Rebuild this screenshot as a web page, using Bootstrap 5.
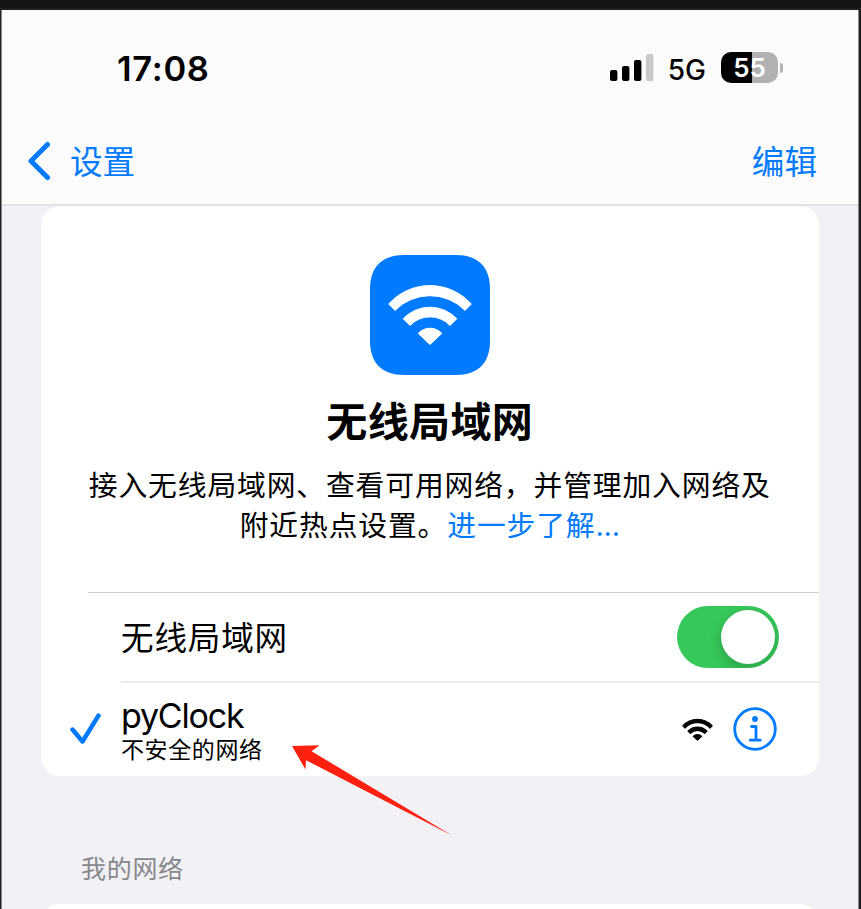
<!DOCTYPE html>
<html lang="zh-CN">
<head>
<meta charset="utf-8">
<meta name="viewport" content="width=device-width, initial-scale=1">
<title>无线局域网</title>
<link href="https://cdn.jsdelivr.net/npm/bootstrap@5.3.0/dist/css/bootstrap.min.css" rel="stylesheet">
<style>
  :root { --ios-blue: #007aff; --ios-bg: #f2f1f6; }
  body { font-family: Inter, "Noto Sans CJK SC", sans-serif; color: #000; background: #141414; }
  svg { display: block; flex: none; }
  .phone { height: 901px; margin-top: 8px; border: solid #1f1f1f; border-width: 2px 2px 0 1px; }
  .screen { background: var(--ios-bg); border: solid #8c8c8e; border-width: 0 1px 0 1px; }
  .topbar { height: 196px; background: #fbfbfc; border-bottom: 2px solid #e2e2e5; }
  .statusbar { height: 118px; padding: 0 75px 0 115px; }
  .clock { font-size: 34.5px; font-weight: 600; line-height: 1; letter-spacing: .7px; }
  .status-icons { padding-bottom: 3px; }
  .carrier { font-size: 28px; font-weight: 500; line-height: 1; margin: 5px 15px 0 14px; }
  .battery { width: 57px; height: 31px; border-radius: 10px; background: linear-gradient(90deg, #000 31.5px, #b1b1b1 31.5px); color: #fff; font-size: 26px; font-weight: 600; line-height: 1; }
  .nub { width: 3px; height: 10px; border-radius: 0 5px 5px 0; background: #b1b1b1; margin-left: 2px; }
  .topnav { height: 66px; padding: 0 41px 0 25px; font-size: 32.6px; line-height: 1; }
  .topnav a, .blurb a { color: var(--ios-blue); text-decoration: none; }
  .nav-text { padding-top: 2px; }
  .back-text { margin-left: 19px; }
  .panel { width: 777.5px; margin-left: 39px; background: #fff; border-radius: 19px; }
  .panel-main { height: 570px; }
  .hero { height: 386px; padding-top: 49px; }
  .tile { width: 120px; height: 120px; }
  .hero h1 { font-size: 41px; font-weight: 700; line-height: 60px; margin: 17px 0 0; letter-spacing: .4px; }
  .blurb { font-size: 28.8px; letter-spacing: .85px; line-height: 40px; margin: 14px 0 0; }
  .dots { letter-spacing: -.2px; }
  .switch-row { height: 90px; margin-left: 47px; padding: 0 40px 0 33px; border-top: 1px solid #cfcfd1; font-size: 32.6px; letter-spacing: .8px; }
  .switch-label { padding-top: 2px; }
  .toggle { width: 102px; height: 62px; border-radius: 31px; background: #36c85a; padding-right: 4px; margin-top: -1px; overflow: hidden; }
  .knob { width: 54px; height: 54px; border-radius: 50%; background: #fff; box-shadow: 0 5px 14px rgba(0,0,0,.2); }
  .net-row { height: 94px; margin-top: -1px; }
  .net-check { width: 80px; padding-left: 28px; }
  .net-body { border-top: 2px solid #ececee; padding-right: 42px; }
  .ssid { font-size: 34px; line-height: 40px; letter-spacing: -1.2px; padding-top: 1px; }
  .note { font-size: 23px; letter-spacing: .6px; line-height: 28px; }
  .section-label { color: #88888c; font-size: 25px; font-weight: 400; letter-spacing: .7px; line-height: 36px; margin: 75px 0 0 79px; }
  .panel-next { margin-top: 17px; }
  .pointer { position: absolute; left: 290px; top: 743px; pointer-events: none; }
</style>
</head>
<body class="overflow-hidden position-relative">
<div class="phone">
  <main class="screen h-100 overflow-hidden">
    <header class="topbar">
      <div class="statusbar d-flex align-items-center justify-content-between">
        <div class="clock">17:08</div>
        <div class="status-icons d-flex align-items-center">
          <svg width="44" height="28" viewBox="0 0 44 28"><rect y="16" width="7.4" height="11" rx="2"/><rect x="12" y="12" width="7.4" height="15" rx="2"/><rect x="24" y="6" width="7.4" height="21" rx="2"/><rect x="36" width="7.4" height="27" rx="2" fill="#c8c8ca"/></svg>
          <span class="carrier">5G</span>
          <div class="battery d-flex align-items-center justify-content-center">55</div>
          <div class="nub"></div>
        </div>
      </div>
      <nav class="topnav d-flex align-items-center justify-content-between">
        <a href="#" class="d-flex align-items-center">
          <svg width="24" height="40" viewBox="0 0 24 40" fill="none" stroke="#007aff" stroke-width="5" stroke-linecap="round" stroke-linejoin="round"><path d="M20.5 3.5 4 20 20.5 36.5"/></svg>
          <span class="nav-text back-text">设置</span>
        </a>
        <a href="#" class="nav-text">编辑</a>
      </nav>
    </header>

    <section class="panel panel-main d-flex flex-column">
      <div class="hero text-center">
        <svg class="tile mx-auto" viewBox="370 255 120 120">
          <path fill="#007aff" d="M404 255H456C478 255 490 267 490 289V341C490 363 478 375 456 375H404C382 375 370 363 370 341V289C370 267 382 255 404 255Z"/>
          <g fill="#fff" stroke="#fff" stroke-width="1" stroke-linejoin="round">
            <path d="M388.700 304A55.500 55.500 0 0 1 471.300 304L465 310.400A49 49 0 0 0 395 310.400Z"/>
            <path d="M403.200 318.700A37 37 0 0 1 456.800 318.700L450 325.500A27.500 27.500 0 0 0 410 325.500Z"/>
            <path d="M418.200 333.400A16 16 0 0 1 441.800 333.400L430 344.500Z"/>
          </g>
        </svg>
        <h1>无线局域网</h1>
        <p class="blurb">接入无线局域网、查看可用网络，并管理加入网络及<br>附近热点设置。<a href="#">进一步了解<span class="dots">...</span></a></p>
      </div>
      <div class="switch-row d-flex align-items-center justify-content-between">
        <span class="switch-label">无线局域网</span>
        <div class="toggle d-flex align-items-center justify-content-end" role="switch" aria-checked="true"><div class="knob"></div></div>
      </div>
      <div class="net-row d-flex">
        <div class="net-check d-flex align-items-center">
          <svg width="32" height="34" viewBox="0 0 32 34" fill="none" stroke="#007aff" stroke-width="4.4" stroke-linecap="round" stroke-linejoin="round"><path d="M3.500 18.500 13.500 30.500 29.500 4.500"/></svg>
        </div>
        <div class="net-body flex-grow-1 d-flex align-items-center justify-content-between">
          <div>
            <div class="ssid">pyClock</div>
            <div class="note">不安全的网络</div>
          </div>
          <div class="d-flex align-items-center">
            <svg width="31" height="24" viewBox="386.500 280 87 66" stroke="#000" stroke-width="3" stroke-linejoin="round">
              <path d="M388.700 304A55.500 55.500 0 0 1 471.300 304L465 310.400A49 49 0 0 0 395 310.400Z"/>
              <path d="M403.200 318.700A37 37 0 0 1 456.800 318.700L450 325.500A27.500 27.500 0 0 0 410 325.500Z"/>
              <path d="M418.200 333.400A16 16 0 0 1 441.800 333.400L430 344.500Z"/>
            </svg>
            <svg class="ms-3 ps-1" width="48" height="44" viewBox="0 0 44 44" fill="none" stroke="#007aff"><circle cx="22" cy="22" r="20.300" stroke-width="2.800"/><circle cx="22" cy="12" r="2.900" fill="#007aff" stroke="none"/><path d="M18.500 19.500H23V33M17.300 33.200H27.300" stroke-width="2.800" stroke-linecap="round" stroke-linejoin="round"/></svg>
          </div>
        </div>
      </div>
    </section>

    <h2 class="section-label">我的网络</h2>
    <section class="panel panel-next h-25"></section>
  </main>
</div>
<svg class="pointer" width="164" height="94" viewBox="290 743 164 94"><path fill="#ff2010" d="M292 746 319.500 745.200 311.500 751.200 452 835.500 306 760.200 305.500 769.500Z"/></svg>
<script src="https://cdn.jsdelivr.net/npm/bootstrap@5.3.0/dist/js/bootstrap.bundle.min.js"></script>
</body>
</html>
